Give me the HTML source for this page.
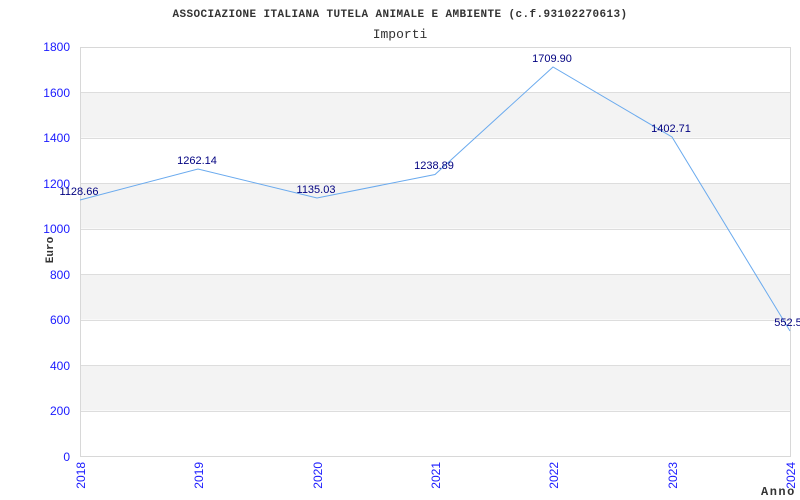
<!DOCTYPE html>
<html><head><meta charset="utf-8"><style>
html,body{margin:0;padding:0;background:#fff;width:800px;height:500px;overflow:hidden}
</style></head><body>
<svg width="800" height="500" xmlns="http://www.w3.org/2000/svg">
<rect width="800" height="500" fill="#fff"/>
<g fill="#f3f3f3">
<rect x="80" y="92" width="710" height="45.5"/>
<rect x="80" y="183" width="710" height="45.5"/>
<rect x="80" y="274" width="710" height="45.5"/>
<rect x="80" y="365" width="710" height="45.5"/>
</g>
<g stroke="#dddddd" stroke-width="1">
<line x1="80" y1="92.5" x2="790" y2="92.5"/>
<line x1="80" y1="138.5" x2="790" y2="138.5"/>
<line x1="80" y1="183.5" x2="790" y2="183.5"/>
<line x1="80" y1="229.5" x2="790" y2="229.5"/>
<line x1="80" y1="274.5" x2="790" y2="274.5"/>
<line x1="80" y1="320.5" x2="790" y2="320.5"/>
<line x1="80" y1="365.5" x2="790" y2="365.5"/>
<line x1="80" y1="411.5" x2="790" y2="411.5"/>
</g>
<rect x="80.5" y="47.5" width="710" height="409" fill="none" stroke="#d8d8d8"/>
<polyline fill="none" stroke="#6aaaee" stroke-width="1" points="80,200 198,169 317,198 435,174.5 553,67 672,137 790,331"/>
<g font-family="Liberation Mono, monospace" fill="#333">
<text x="400" y="17" text-anchor="middle" font-size="11" font-weight="bold" letter-spacing="0.4">ASSOCIAZIONE ITALIANA TUTELA ANIMALE E AMBIENTE (c.f.93102270613)</text>
<text x="400" y="38" text-anchor="middle" font-size="13">Importi</text>
<text x="761" y="495" font-size="12" font-weight="bold" letter-spacing="1.5">Anno</text>
<text transform="translate(53,250) rotate(-90)" text-anchor="middle" font-size="11" font-weight="bold">Euro</text>
</g>
<g font-family="Liberation Sans, sans-serif" font-size="12" fill="#1a1aff" text-anchor="end">
<text x="70" y="51">1800</text>
<text x="70" y="97">1600</text>
<text x="70" y="142">1400</text>
<text x="70" y="188">1200</text>
<text x="70" y="233">1000</text>
<text x="70" y="279">800</text>
<text x="70" y="324">600</text>
<text x="70" y="370">400</text>
<text x="70" y="415">200</text>
<text x="70" y="461">0</text>
</g>
<g font-family="Liberation Sans, sans-serif" font-size="12" fill="#1a1aff" text-anchor="end">
<text transform="translate(85,462) rotate(-90)">2018</text>
<text transform="translate(203,462) rotate(-90)">2019</text>
<text transform="translate(322,462) rotate(-90)">2020</text>
<text transform="translate(440,462) rotate(-90)">2021</text>
<text transform="translate(558,462) rotate(-90)">2022</text>
<text transform="translate(677,462) rotate(-90)">2023</text>
<text transform="translate(795,462) rotate(-90)">2024</text>
</g>
<g font-family="Liberation Sans, sans-serif" font-size="11" fill="#000080" text-anchor="middle">
<text x="79" y="195">1128.66</text>
<text x="197" y="164">1262.14</text>
<text x="316" y="193">1135.03</text>
<text x="434" y="169">1238.89</text>
<text x="552" y="62">1709.90</text>
<text x="671" y="132">1402.71</text>
<text x="788" y="326">552.5</text>
</g>
</svg>
</body></html>
